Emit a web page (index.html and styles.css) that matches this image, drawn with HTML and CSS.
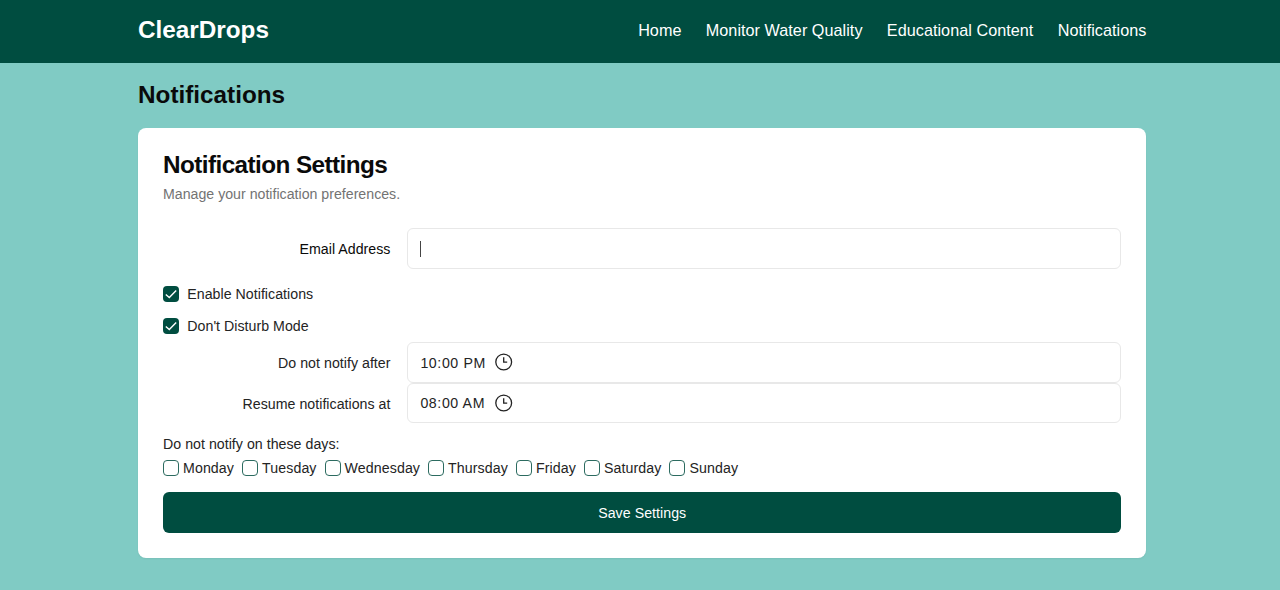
FILE: index.html
```html
<!DOCTYPE html>
<html lang="en">
<head>
<meta charset="utf-8">
<title>ClearDrops</title>
<link rel="stylesheet" href="styles.css">
</head>
<body>
<svg class="defs" width="0" height="0">
  <symbol id="check" viewBox="0 0 16 16"><path d="M2.8 8.4 6.3 11.6 13.2 4.6" fill="none" stroke="#fff" stroke-width="1.4"/></symbol>
  <symbol id="clock" viewBox="0 0 18 18"><circle cx="8.7" cy="9" r="7.9" fill="none" stroke="#222" stroke-width="1.3"/><path d="M8.7 4.2V9.2H12.2" fill="none" stroke="#222" stroke-width="1.3"/></symbol>
</svg>
<header class="header">
  <div class="container header-row">
    <div class="logo"><span>ClearDrops</span></div>
    <nav class="nav"><a>Home</a><a>Monitor Water Quality</a><a>Educational Content</a><a>Notifications</a></nav>
  </div>
</header>
<main class="container">
  <h1 class="page-title"><span>Notifications</span></h1>
  <section class="card">
    <h2 class="card-title"><span>Notification Settings</span></h2>
    <p class="subtitle"><span>Manage your notification preferences.</span></p>
    <div class="field email">
      <label class="strong">Email Address</label>
      <div class="input"><span class="caret"></span></div>
    </div>
    <div class="toggle"><span class="box checked"><svg width="16" height="16"><use href="#check"/></svg></span><span>Enable Notifications</span></div>
    <div class="toggle second"><span class="box checked"><svg width="16" height="16"><use href="#check"/></svg></span><span>Don't Disturb Mode</span></div>
    <div class="field">
      <label>Do not notify after</label>
      <div class="input"><span class="time">10:00 PM</span><svg class="clock" width="18" height="18"><use href="#clock"/></svg></div>
    </div>
    <div class="field">
      <label>Resume notifications at</label>
      <div class="input"><span class="time">08:00 AM</span><svg class="clock" width="18" height="18"><use href="#clock"/></svg></div>
    </div>
    <p class="days-label"><span>Do not notify on these days:</span></p>
    <div class="days">
      <div class="day"><span class="box"></span><span>Monday</span></div>
      <div class="day"><span class="box"></span><span>Tuesday</span></div>
      <div class="day"><span class="box"></span><span>Wednesday</span></div>
      <div class="day"><span class="box"></span><span>Thursday</span></div>
      <div class="day"><span class="box"></span><span>Friday</span></div>
      <div class="day"><span class="box"></span><span>Saturday</span></div>
      <div class="day"><span class="box"></span><span>Sunday</span></div>
    </div>
    <button class="save">Save Settings</button>
  </section>
</main>
</body>
</html>
```

FILE: styles.css
```css
* { box-sizing: border-box; margin: 0; padding: 0; }
body {
  min-height: 590px;
  overflow: hidden;
  background: #80cbc4;
  color: #242424;
  font: 14.18px/20px "Liberation Sans", Arial, sans-serif;
  letter-spacing: 0.03px;
  white-space: nowrap;
}
.defs { position: absolute; }
.container { width: 1008.4px; margin-left: 138px; }
.header { height: 63px; background: #004d40; color: #fff; }
.header-row { height: 61px; display: flex; align-items: center; justify-content: space-between; }
.logo { font-size: 24.3px; line-height: 32px; font-weight: 700; letter-spacing: 0; padding-bottom: 1px; }
.nav { display: flex; gap: 24.3px; padding-bottom: 2px; font-size: 16.2px; letter-spacing: 0.04px; }
.page-title { padding-top: 16px; height: 65px; font-size: 24.3px; line-height: 32px; color: #0a0a0a; letter-spacing: 0; }
.card { height: 430px; padding: 25px 25px 0; border-radius: 8px; background: #fff; box-shadow: 0 1px 2px rgba(0, 0, 0, .06); }
.card-title { height: 31px; font-size: 24.3px; line-height: 24px; letter-spacing: -0.57px; color: #0a0a0a; }
.subtitle { height: 44px; color: #737373; letter-spacing: 0; }
.field { display: grid; grid-template-columns: 227.5px 1fr; gap: 16.5px; align-items: center; height: 40.5px; }
.field label { padding-top: 2px; text-align: right; }
.strong { color: #0a0a0a; }
.input { display: flex; align-items: center; height: 40.5px; border: 1px solid #e8e8e8; border-radius: 6px; padding-left: 12.4px; }
.caret { width: 1px; height: 16px; margin: 1px 0 0 -0.9px; background: #444; }
.time { width: 65px; padding-top: 1px; letter-spacing: 0.6px; }
.clock { margin-left: 9.5px; }
.toggle { display: flex; align-items: center; gap: 8.3px; height: 20px; margin-top: 15px; }
.toggle.second { margin: 12.5px 0 6px; }
.box { width: 16px; height: 16px; border: 1px solid #2c6b60; border-radius: 4px; }
.box.checked { border: 0; background: #004d40; }
.box svg { display: block; }
.days-label { margin-top: 11px; }
.days { display: flex; gap: 8px; margin-top: 4px; letter-spacing: 0.1px; }
.day { display: flex; align-items: center; gap: 4px; }
.save { display: block; width: 100%; height: 40.5px; margin-top: 14px; padding-top: 1px; border: 0; border-radius: 6px; background: #004d40; color: #fff; font: inherit; letter-spacing: 0.05px; }
```
